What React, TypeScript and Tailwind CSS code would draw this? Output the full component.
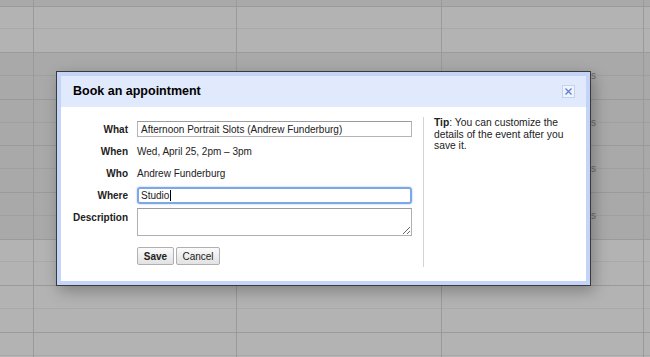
const hours = [true, false, true, true, true, true, false, false, false];
const columns = ["time", "mon", "tue", "wed", "edge"];

function HourCell({ dark }: { dark: boolean }) {
  return (
    <div
      className={`h-[46.6px] shrink-0 border-b border-[#9a9a9a] ${dark ? "bg-[#a9a9a9]" : "bg-[#b3b3b3]"}`}
    >
      <div className={`h-1/2 border-b ${dark ? "border-[#a0a0a0]" : "border-[#a9a9a9]"}`} />
    </div>
  );
}

function Calendar() {
  return (
    <div className="grid h-full grid-cols-[33px_203px_205px_202px_1fr] overflow-hidden">
      {columns.map((col, ci) => (
        <div
          key={col}
          className={`-mt-[40px] flex flex-col ${ci > 0 ? "border-l border-[#9a9a9a]" : ""}`}
        >
          {hours.map((dark, hi) => (
            <HourCell key={hi} dark={dark} />
          ))}
        </div>
      ))}
    </div>
  );
}

// tails of the event titles peeking out from behind the dialog
function EventTails() {
  return (
    <div className="absolute left-[591px] top-[70px] flex flex-col text-[10px] leading-[12px] text-[#6a6a6a]">
      {[0, 1, 2, 3].map((i) => (
        <div key={i} className="h-[46.6px]">
          s
        </div>
      ))}
    </div>
  );
}

function Row({ label, children }: { label: string; children: React.ReactNode }) {
  return (
    <div className="flex h-[22px] items-center">
      <div className="w-[55px] shrink-0 text-right font-bold text-[#222]">{label}</div>
      <div className="ml-[9px] w-[275px]">{children}</div>
    </div>
  );
}

function Dialog() {
  return (
    <div className="absolute left-[56px] top-[71px] h-[215px] w-[535px] border border-[#3a3a3a] bg-[#c4d4f6] p-[4px] shadow-[3px_5px_14px_rgba(0,0,0,0.28)]">
      <div className="flex h-full flex-col bg-white">
        <div className="flex h-[31px] shrink-0 items-center justify-between bg-[#e1e9fc] pl-[12px] pr-[11px]">
          <h2 className="text-[12.5px] font-bold text-black">Book an appointment</h2>
          <button
            type="button"
            className="flex h-[13px] w-[13px] items-center justify-center border border-[#c3d2f3] bg-[#eef3fe]"
          >
            <svg width="9" height="9" viewBox="0 0 9 9">
              <path d="M1.5 1.5L7.5 7.5M7.5 1.5L1.5 7.5" stroke="#5b82d4" strokeWidth="1.4" />
            </svg>
          </button>
        </div>

        <div className="flex pl-[12px] pt-[10px] text-[10px] text-[#222]">
          <div className="flex flex-col pb-[2px] pt-[1px]">
            <Row label="What">
              <div className="flex h-[16px] items-center border border-[#b5b5b5] border-t-[#9c9c9c] pl-[3px]">
                Afternoon Portrait Slots (Andrew Funderburg)
              </div>
            </Row>
            <Row label="When">Wed, April 25, 2pm – 3pm</Row>
            <Row label="Who">Andrew Funderburg</Row>
            <Row label="Where">
              <div className="flex h-[17px] items-center rounded-[3px] border-2 border-[#7ea7e6] pl-[2px] shadow-[0_0_2px_rgba(90,140,220,0.6)]">
                Studio
                <span className="ml-px h-[11px] w-px bg-black" />
              </div>
            </Row>
            <div className="mt-[2px] flex">
              <div className="w-[55px] shrink-0 pt-[2px] text-right font-bold">Description</div>
              <textarea
                readOnly
                className="ml-[9px] h-[28px] w-[275px] resize border border-[#b0b0b0] border-t-[#9c9c9c] bg-white outline-none"
              />
            </div>
            <div className="ml-[64px] mt-[11px] flex gap-[2px]">
              <button
                type="button"
                className="h-[18px] w-[37px] rounded-[2px] border border-[#b0b0b0] bg-gradient-to-b from-[#fbfbfb] to-[#e2e2e2] font-bold text-[#222]"
              >
                Save
              </button>
              <button
                type="button"
                className="h-[18px] w-[44px] rounded-[2px] border border-[#b0b0b0] bg-gradient-to-b from-[#fbfbfb] to-[#e2e2e2] text-[#222]"
              >
                Cancel
              </button>
            </div>
          </div>

          <div className="ml-[11px] border-l border-[#d4d4d4] pl-[10px]">
            <p className="w-[132px] text-[10.3px] leading-[11.5px] text-[#222]">
              <span className="font-bold">Tip</span>: You can customize the details of the event after you save it.
            </p>
          </div>
        </div>
      </div>
    </div>
  );
}

export default function App() {
  return (
    <div className="relative h-[357px] w-full overflow-hidden bg-[#b3b3b3]" style={{ fontFamily: '"Liberation Sans", Arial, sans-serif' }}>
      <Calendar />
      <EventTails />
      <Dialog />
    </div>
  );
}
